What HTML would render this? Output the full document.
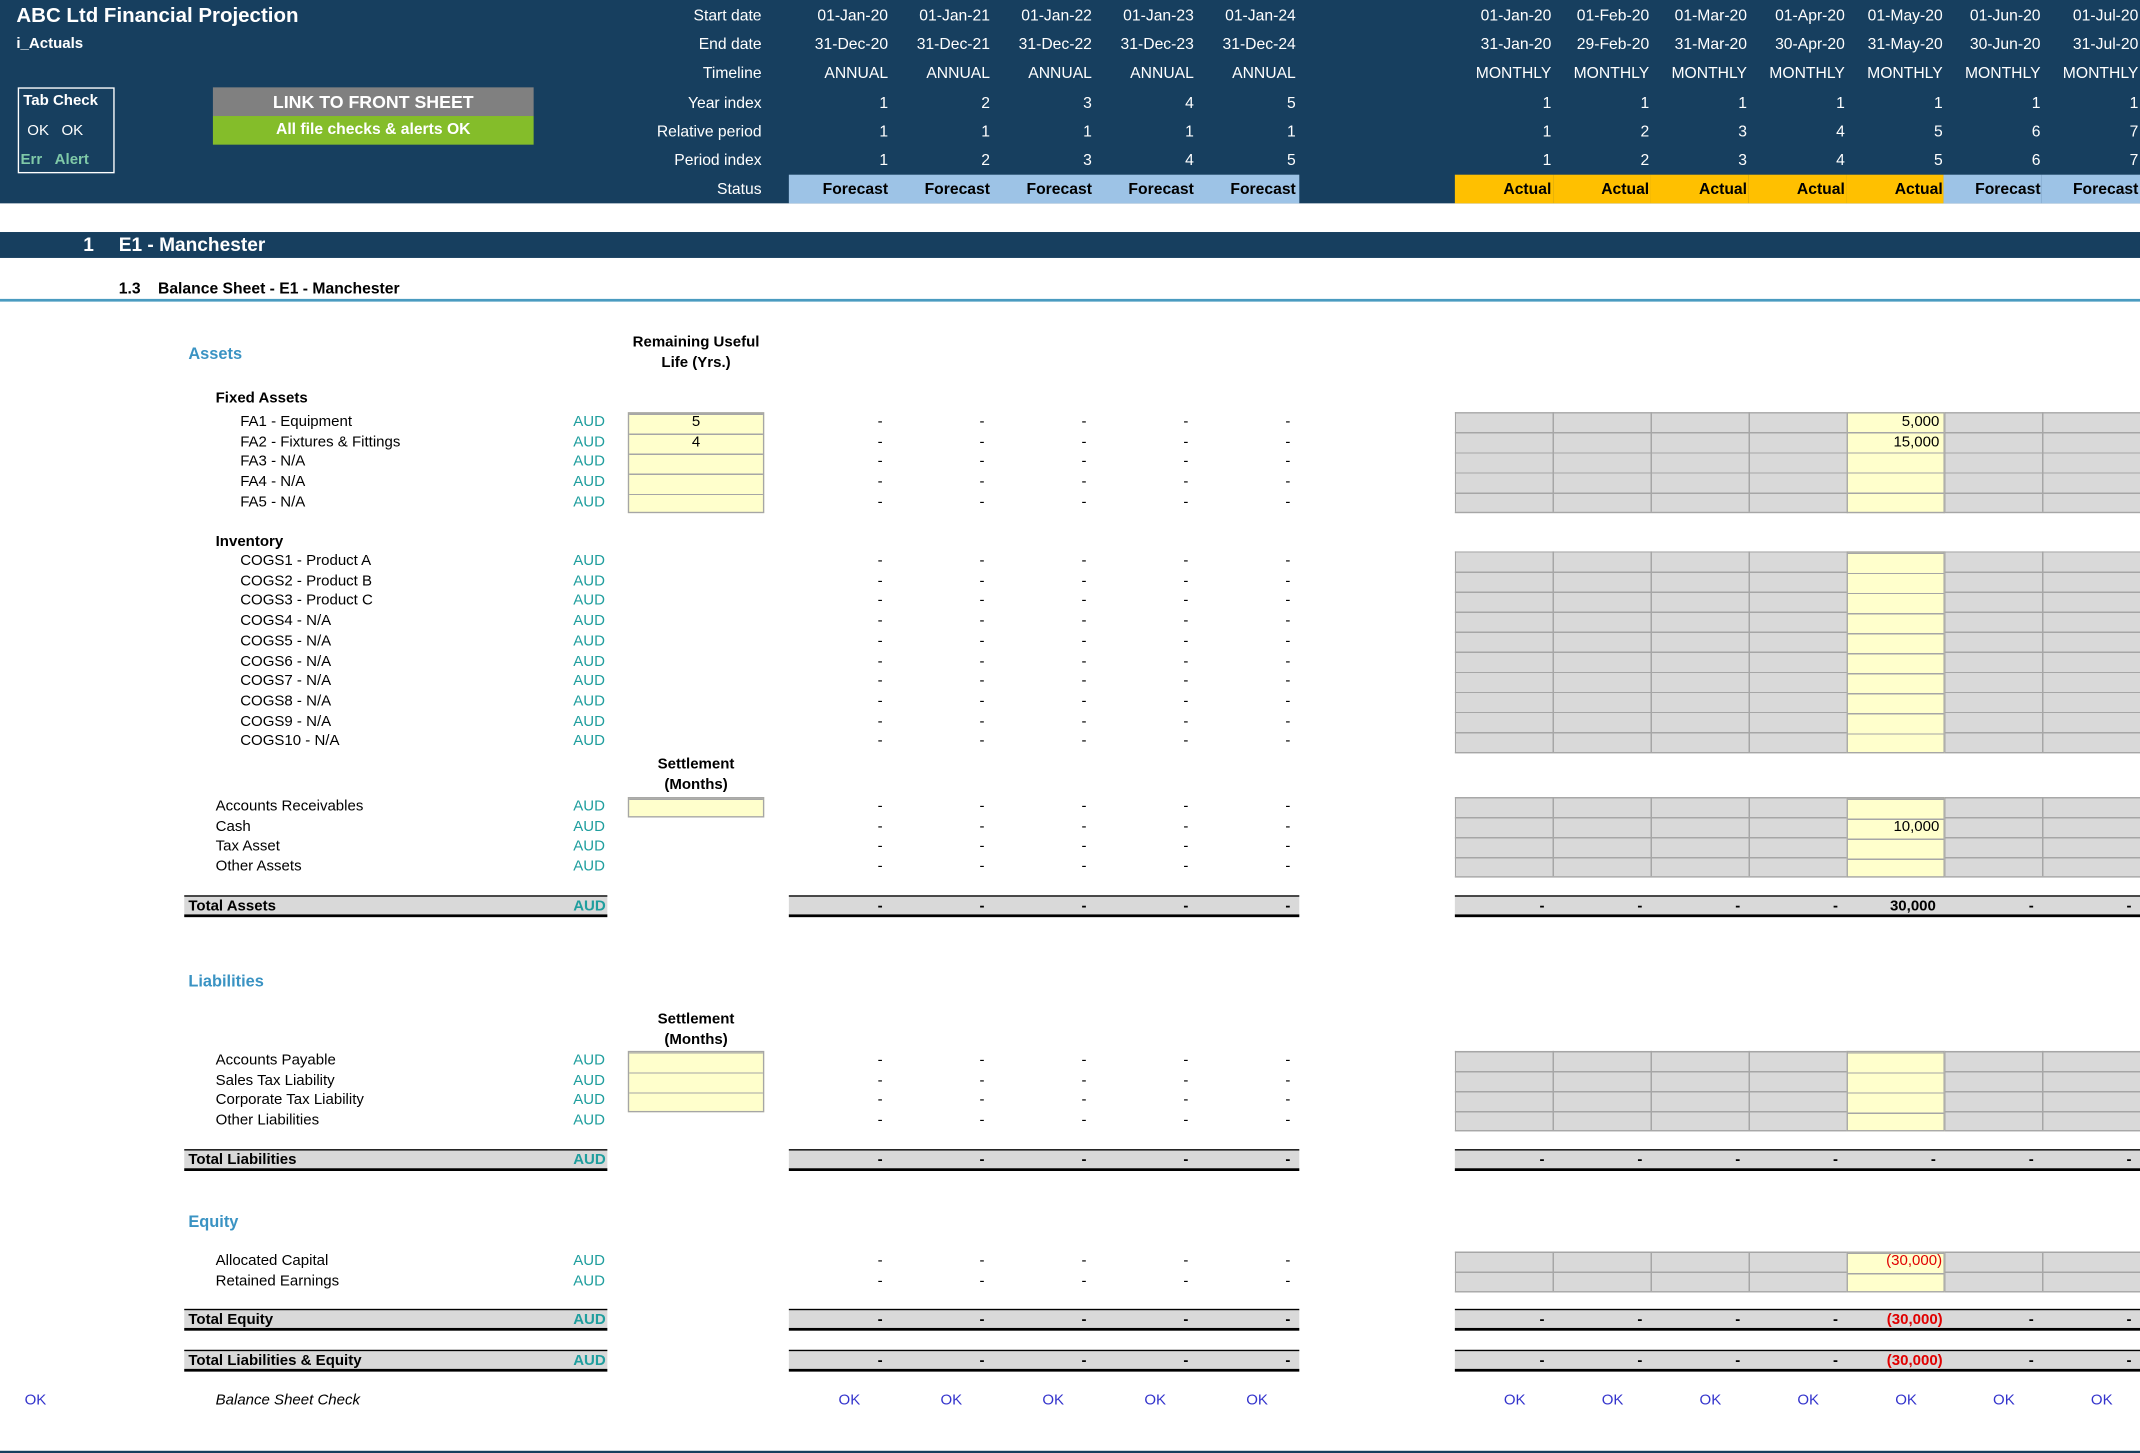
<!DOCTYPE html>
<html><head><meta charset="utf-8">
<style>
html,body{margin:0;padding:0;background:#fff;width:2140px;height:1452px;overflow:hidden}
#w{position:absolute;left:0;top:0;width:1568px;height:1064px;transform:scale(1.364796);transform-origin:0 0;font-family:"Liberation Sans",Arial,sans-serif;font-size:11px;color:#000}
#w div,#w span{position:absolute}
.hd{left:0;top:0;width:1568px;height:149px;background:#173f5f}
.wt{color:#fff}
.hl{width:120px;text-align:right;left:438px;color:#fff;font-size:11.5px;line-height:14px}
.hv{display:flex;left:578px;width:374px;color:#fff;font-size:11.5px;line-height:14px}
.hm{display:flex;left:1066px;width:502px;color:#fff;font-size:11.5px;line-height:14px}
.hv i{width:74.7px;text-align:right;padding-right:2px;box-sizing:border-box;font-style:normal}
.hm i{width:71.7px;text-align:right;padding-right:1px;box-sizing:border-box;font-style:normal}
.st{height:21px;line-height:21px;font-weight:bold;color:#000;font-size:11.5px}
.r{left:0;width:1568px;height:14.7px;line-height:14.7px}
.lb{left:158px}.lb2{left:176px}
.aud{left:420px;color:#1f9e9e}
.ds{left:578px;width:374px;display:flex}
.ds i{width:74.7px;text-align:right;padding-right:6px;box-sizing:border-box;font-style:normal}
.ms{left:1066px;width:502px;display:flex}
.ms i{width:71.7px;text-align:right;padding-right:6px;box-sizing:border-box;font-style:normal}
.gb{left:1066px;width:502px;background-color:#d9d9d9;background-image:repeating-linear-gradient(to right,#a6a6a6 0,#a6a6a6 1px,transparent 1px,transparent 71.7px),repeating-linear-gradient(to bottom,#a6a6a6 0,#a6a6a6 1px,transparent 1px,transparent 14.7px);border-bottom:1px solid #a6a6a6;box-sizing:border-box}
.yb{left:1353px;width:71.7px;background-color:#ffffcc;background-image:repeating-linear-gradient(to bottom,#a6a6a6 0,#a6a6a6 1px,transparent 1px,transparent 14.7px);border-left:1px solid #a6a6a6;border-right:1px solid #a6a6a6;border-bottom:1px solid #a6a6a6;box-sizing:border-box}
.ib{left:460px;width:100px;background-color:#ffffcc;background-image:repeating-linear-gradient(to bottom,#a6a6a6 0,#a6a6a6 1px,transparent 1px,transparent 14.7px);border:1px solid #a6a6a6;border-top:none;box-sizing:border-box}
.tb{height:13px;background:#d9d9d9;border-top:1px solid #000;border-bottom:2px solid #000}
.h2{color:#3a93c3;font-weight:bold;font-size:12px}
.bh{font-weight:bold;text-align:center;width:120px;left:450px;line-height:14.5px}
.ok{color:#3333cc}
.red{color:#e00000}
</style></head><body><div id="w">
<div class="hd"></div>
<span class="wt" style="left:12px;top:3px;font-size:15px;font-weight:bold">ABC Ltd Financial Projection</span>
<span class="wt" style="left:12px;top:26px;font-size:11px;font-weight:bold">i_Actuals</span>
<div style="left:13px;top:64px;width:71px;height:63px;border:1px solid #fff;box-sizing:border-box"></div>
<span class="wt" style="left:17px;top:68px;font-weight:bold">Tab Check</span>
<span class="wt" style="left:20px;top:90px">OK&nbsp;&nbsp;&nbsp;OK</span>
<span style="left:15px;top:111px;color:#7fc9a8;font-weight:bold">Err&nbsp;&nbsp;&nbsp;Alert</span>
<div style="left:156px;top:64px;width:235px;height:21px;background:#808080;color:#fff;font-weight:bold;font-size:13px;text-align:center;line-height:21px">LINK TO FRONT SHEET</div>
<div style="left:156px;top:85px;width:235px;height:21px;background:#84bd2a;color:#fff;font-weight:bold;font-size:11.5px;text-align:center;line-height:21px">All file checks &amp; alerts OK</div>

<span class="hl" style="top:5px">Start date</span>
<span class="hl" style="top:26px">End date</span>
<span class="hl" style="top:47px">Timeline</span>
<span class="hl" style="top:69px">Year index</span>
<span class="hl" style="top:90px">Relative period</span>
<span class="hl" style="top:111px">Period index</span>
<span class="hl" style="top:132px">Status</span>

<div class="hv" style="top:5px"><i>01-Jan-20</i><i>01-Jan-21</i><i>01-Jan-22</i><i>01-Jan-23</i><i>01-Jan-24</i></div>
<div class="hv" style="top:26px"><i>31-Dec-20</i><i>31-Dec-21</i><i>31-Dec-22</i><i>31-Dec-23</i><i>31-Dec-24</i></div>
<div class="hv" style="top:47px"><i>ANNUAL</i><i>ANNUAL</i><i>ANNUAL</i><i>ANNUAL</i><i>ANNUAL</i></div>
<div class="hv" style="top:69px"><i>1</i><i>2</i><i>3</i><i>4</i><i>5</i></div>
<div class="hv" style="top:90px"><i>1</i><i>1</i><i>1</i><i>1</i><i>1</i></div>
<div class="hv" style="top:111px"><i>1</i><i>2</i><i>3</i><i>4</i><i>5</i></div>
<div class="hv st" style="top:128px;background:#9dc3e6;line-height:22px"><i>Forecast</i><i>Forecast</i><i>Forecast</i><i>Forecast</i><i>Forecast</i></div>

<div class="hm" style="top:5px"><i>01-Jan-20</i><i>01-Feb-20</i><i>01-Mar-20</i><i>01-Apr-20</i><i>01-May-20</i><i>01-Jun-20</i><i>01-Jul-20</i></div>
<div class="hm" style="top:26px"><i>31-Jan-20</i><i>29-Feb-20</i><i>31-Mar-20</i><i>30-Apr-20</i><i>31-May-20</i><i>30-Jun-20</i><i>31-Jul-20</i></div>
<div class="hm" style="top:47px"><i>MONTHLY</i><i>MONTHLY</i><i>MONTHLY</i><i>MONTHLY</i><i>MONTHLY</i><i>MONTHLY</i><i>MONTHLY</i></div>
<div class="hm" style="top:69px"><i>1</i><i>1</i><i>1</i><i>1</i><i>1</i><i>1</i><i>1</i></div>
<div class="hm" style="top:90px"><i>1</i><i>2</i><i>3</i><i>4</i><i>5</i><i>6</i><i>7</i></div>
<div class="hm" style="top:111px"><i>1</i><i>2</i><i>3</i><i>4</i><i>5</i><i>6</i><i>7</i></div>
<div class="hm st" style="top:128px;line-height:22px"><i style="background:#ffc000">Actual</i><i style="background:#ffc000">Actual</i><i style="background:#ffc000">Actual</i><i style="background:#ffc000">Actual</i><i style="background:#ffc000">Actual</i><i style="background:#9dc3e6">Forecast</i><i style="background:#9dc3e6">Forecast</i></div>

<div style="left:0;top:170px;width:1568px;height:19px;background:#173f5f"></div>
<span class="wt" style="left:61px;top:171px;font-size:14px;font-weight:bold">1</span>
<span class="wt" style="left:87px;top:171px;font-size:14px;font-weight:bold">E1 - Manchester</span>
<span style="left:87px;top:206px;font-size:11.5px;font-weight:bold">1.3&nbsp;&nbsp;&nbsp;&nbsp;Balance Sheet - E1 - Manchester</span>
<div style="left:0;top:219px;width:1568px;height:1.5px;background:#4a9bc0"></div>

<span class="h2" style="left:138px;top:252px">Assets</span>
<span class="bh" style="top:244px">Remaining Useful<br>Life (Yrs.)</span>

<div class="r" style="top:285px"><span class="lb" style="font-weight:bold">Fixed Assets</span></div>
<div class="gb" style="top:302px;height:74px"></div>
<div class="yb" style="top:302px;height:74px"></div>
<div class="ib" style="top:302px;height:74px;border-top:1px solid #a6a6a6"></div>
<div class="r" style="top:302px"><span class="lb2">FA1 - Equipment</span><span class="aud">AUD</span><span style="left:460px;width:100px;text-align:center">5</span><div class="ds"><i>-</i><i>-</i><i>-</i><i>-</i><i>-</i></div><span style="left:1353px;width:68px;text-align:right">5,000</span></div>
<div class="r" style="top:316.7px"><span class="lb2">FA2 - Fixtures &amp; Fittings</span><span class="aud">AUD</span><span style="left:460px;width:100px;text-align:center">4</span><div class="ds"><i>-</i><i>-</i><i>-</i><i>-</i><i>-</i></div><span style="left:1353px;width:68px;text-align:right">15,000</span></div>
<div class="r" style="top:331.4px"><span class="lb2">FA3 - N/A</span><span class="aud">AUD</span><div class="ds"><i>-</i><i>-</i><i>-</i><i>-</i><i>-</i></div></div>
<div class="r" style="top:346.1px"><span class="lb2">FA4 - N/A</span><span class="aud">AUD</span><div class="ds"><i>-</i><i>-</i><i>-</i><i>-</i><i>-</i></div></div>
<div class="r" style="top:360.8px"><span class="lb2">FA5 - N/A</span><span class="aud">AUD</span><div class="ds"><i>-</i><i>-</i><i>-</i><i>-</i><i>-</i></div></div>

<div class="r" style="top:390px"><span class="lb" style="font-weight:bold">Inventory</span></div>
<div class="gb" style="top:404px;height:148px"></div>
<div class="yb" style="top:404px;height:148px;border-top:1px solid #a6a6a6"></div>
<div class="r" style="top:404px"><span class="lb2">COGS1 - Product A</span><span class="aud">AUD</span><div class="ds"><i>-</i><i>-</i><i>-</i><i>-</i><i>-</i></div></div>
<div class="r" style="top:418.7px"><span class="lb2">COGS2 - Product B</span><span class="aud">AUD</span><div class="ds"><i>-</i><i>-</i><i>-</i><i>-</i><i>-</i></div></div>
<div class="r" style="top:433.4px"><span class="lb2">COGS3 - Product C</span><span class="aud">AUD</span><div class="ds"><i>-</i><i>-</i><i>-</i><i>-</i><i>-</i></div></div>
<div class="r" style="top:448.1px"><span class="lb2">COGS4 - N/A</span><span class="aud">AUD</span><div class="ds"><i>-</i><i>-</i><i>-</i><i>-</i><i>-</i></div></div>
<div class="r" style="top:462.8px"><span class="lb2">COGS5 - N/A</span><span class="aud">AUD</span><div class="ds"><i>-</i><i>-</i><i>-</i><i>-</i><i>-</i></div></div>
<div class="r" style="top:477.5px"><span class="lb2">COGS6 - N/A</span><span class="aud">AUD</span><div class="ds"><i>-</i><i>-</i><i>-</i><i>-</i><i>-</i></div></div>
<div class="r" style="top:492.2px"><span class="lb2">COGS7 - N/A</span><span class="aud">AUD</span><div class="ds"><i>-</i><i>-</i><i>-</i><i>-</i><i>-</i></div></div>
<div class="r" style="top:506.9px"><span class="lb2">COGS8 - N/A</span><span class="aud">AUD</span><div class="ds"><i>-</i><i>-</i><i>-</i><i>-</i><i>-</i></div></div>
<div class="r" style="top:521.6px"><span class="lb2">COGS9 - N/A</span><span class="aud">AUD</span><div class="ds"><i>-</i><i>-</i><i>-</i><i>-</i><i>-</i></div></div>
<div class="r" style="top:536.3px"><span class="lb2">COGS10 - N/A</span><span class="aud">AUD</span><div class="ds"><i>-</i><i>-</i><i>-</i><i>-</i><i>-</i></div></div>

<span class="bh" style="top:553px">Settlement<br>(Months)</span>
<div class="gb" style="top:584px;height:59px"></div>
<div class="yb" style="top:584px;height:59px;border-top:1px solid #a6a6a6"></div>
<div class="ib" style="top:584px;height:15px;border-top:1px solid #a6a6a6"></div>
<div class="r" style="top:584px"><span class="lb">Accounts Receivables</span><span class="aud">AUD</span><div class="ds"><i>-</i><i>-</i><i>-</i><i>-</i><i>-</i></div></div>
<div class="r" style="top:598.7px"><span class="lb">Cash</span><span class="aud">AUD</span><div class="ds"><i>-</i><i>-</i><i>-</i><i>-</i><i>-</i></div><span style="left:1353px;width:68px;text-align:right">10,000</span></div>
<div class="r" style="top:613.4px"><span class="lb">Tax Asset</span><span class="aud">AUD</span><div class="ds"><i>-</i><i>-</i><i>-</i><i>-</i><i>-</i></div></div>
<div class="r" style="top:628.1px"><span class="lb">Other Assets</span><span class="aud">AUD</span><div class="ds"><i>-</i><i>-</i><i>-</i><i>-</i><i>-</i></div></div>

<div class="tb" style="top:656px;left:135px;width:310px"></div>
<div class="tb" style="top:656px;left:578px;width:374px"></div>
<div class="tb" style="top:656px;left:1066px;width:502px"></div>
<div class="r" style="top:657px;font-weight:bold"><span style="left:138px">Total Assets</span><span class="aud">AUD</span><div class="ds"><i>-</i><i>-</i><i>-</i><i>-</i><i>-</i></div><div class="ms"><i>-</i><i>-</i><i>-</i><i>-</i><i>30,000</i><i>-</i><i>-</i></div></div>

<span class="h2" style="left:138px;top:712px">Liabilities</span>
<span class="bh" style="top:740px">Settlement<br>(Months)</span>
<div class="gb" style="top:770px;height:59px"></div>
<div class="yb" style="top:770px;height:59px;border-top:1px solid #a6a6a6"></div>
<div class="ib" style="top:770px;height:44.5px;border-top:1px solid #a6a6a6"></div>
<div class="r" style="top:770px"><span class="lb">Accounts Payable</span><span class="aud">AUD</span><div class="ds"><i>-</i><i>-</i><i>-</i><i>-</i><i>-</i></div></div>
<div class="r" style="top:784.7px"><span class="lb">Sales Tax Liability</span><span class="aud">AUD</span><div class="ds"><i>-</i><i>-</i><i>-</i><i>-</i><i>-</i></div></div>
<div class="r" style="top:799.4px"><span class="lb">Corporate Tax Liability</span><span class="aud">AUD</span><div class="ds"><i>-</i><i>-</i><i>-</i><i>-</i><i>-</i></div></div>
<div class="r" style="top:814.1px"><span class="lb">Other Liabilities</span><span class="aud">AUD</span><div class="ds"><i>-</i><i>-</i><i>-</i><i>-</i><i>-</i></div></div>

<div class="tb" style="top:842px;left:135px;width:310px"></div>
<div class="tb" style="top:842px;left:578px;width:374px"></div>
<div class="tb" style="top:842px;left:1066px;width:502px"></div>
<div class="r" style="top:843px;font-weight:bold"><span style="left:138px">Total Liabilities</span><span class="aud">AUD</span><div class="ds"><i>-</i><i>-</i><i>-</i><i>-</i><i>-</i></div><div class="ms"><i>-</i><i>-</i><i>-</i><i>-</i><i>-</i><i>-</i><i>-</i></div></div>

<span class="h2" style="left:138px;top:888px">Equity</span>
<div class="gb" style="top:917px;height:30px"></div>
<div class="yb" style="top:917px;height:30px;border-top:1px solid #a6a6a6"></div>
<div class="r" style="top:917px"><span class="lb">Allocated Capital</span><span class="aud">AUD</span><div class="ds"><i>-</i><i>-</i><i>-</i><i>-</i><i>-</i></div><span class="red" style="left:1353px;width:70px;text-align:right">(30,000)</span></div>
<div class="r" style="top:931.7px"><span class="lb">Retained Earnings</span><span class="aud">AUD</span><div class="ds"><i>-</i><i>-</i><i>-</i><i>-</i><i>-</i></div></div>

<div class="tb" style="top:959px;left:135px;width:310px"></div>
<div class="tb" style="top:959px;left:578px;width:374px"></div>
<div class="tb" style="top:959px;left:1066px;width:502px"></div>
<div class="r" style="top:960px;font-weight:bold"><span style="left:138px">Total Equity</span><span class="aud">AUD</span><div class="ds"><i>-</i><i>-</i><i>-</i><i>-</i><i>-</i></div><div class="ms"><i>-</i><i>-</i><i>-</i><i>-</i><i class="red" style="padding-right:1px">(30,000)</i><i>-</i><i>-</i></div></div>

<div class="tb" style="top:989px;left:135px;width:310px"></div>
<div class="tb" style="top:989px;left:578px;width:374px"></div>
<div class="tb" style="top:989px;left:1066px;width:502px"></div>
<div class="r" style="top:990px;font-weight:bold"><span style="left:138px">Total Liabilities &amp; Equity</span><span class="aud">AUD</span><div class="ds"><i>-</i><i>-</i><i>-</i><i>-</i><i>-</i></div><div class="ms"><i>-</i><i>-</i><i>-</i><i>-</i><i class="red" style="padding-right:1px">(30,000)</i><i>-</i><i>-</i></div></div>

<div class="r" style="top:1019px"><span class="ok" style="left:18px">OK</span><span class="lb" style="font-style:italic">Balance Sheet Check</span>
<div class="ds ok" style="left:578px"><i style="text-align:center;padding-right:0;padding-left:14px">OK</i><i style="text-align:center;padding-right:0;padding-left:14px">OK</i><i style="text-align:center;padding-right:0;padding-left:14px">OK</i><i style="text-align:center;padding-right:0;padding-left:14px">OK</i><i style="text-align:center;padding-right:0;padding-left:14px">OK</i></div>
<div class="ms ok"><i style="text-align:center;padding-right:0;padding-left:16px">OK</i><i style="text-align:center;padding-right:0;padding-left:16px">OK</i><i style="text-align:center;padding-right:0;padding-left:16px">OK</i><i style="text-align:center;padding-right:0;padding-left:16px">OK</i><i style="text-align:center;padding-right:0;padding-left:16px">OK</i><i style="text-align:center;padding-right:0;padding-left:16px">OK</i><i style="text-align:center;padding-right:0;padding-left:16px">OK</i></div></div>

<div style="left:0;top:1062.5px;width:1568px;height:2px;background:#173f5f"></div>
</div></body></html>
